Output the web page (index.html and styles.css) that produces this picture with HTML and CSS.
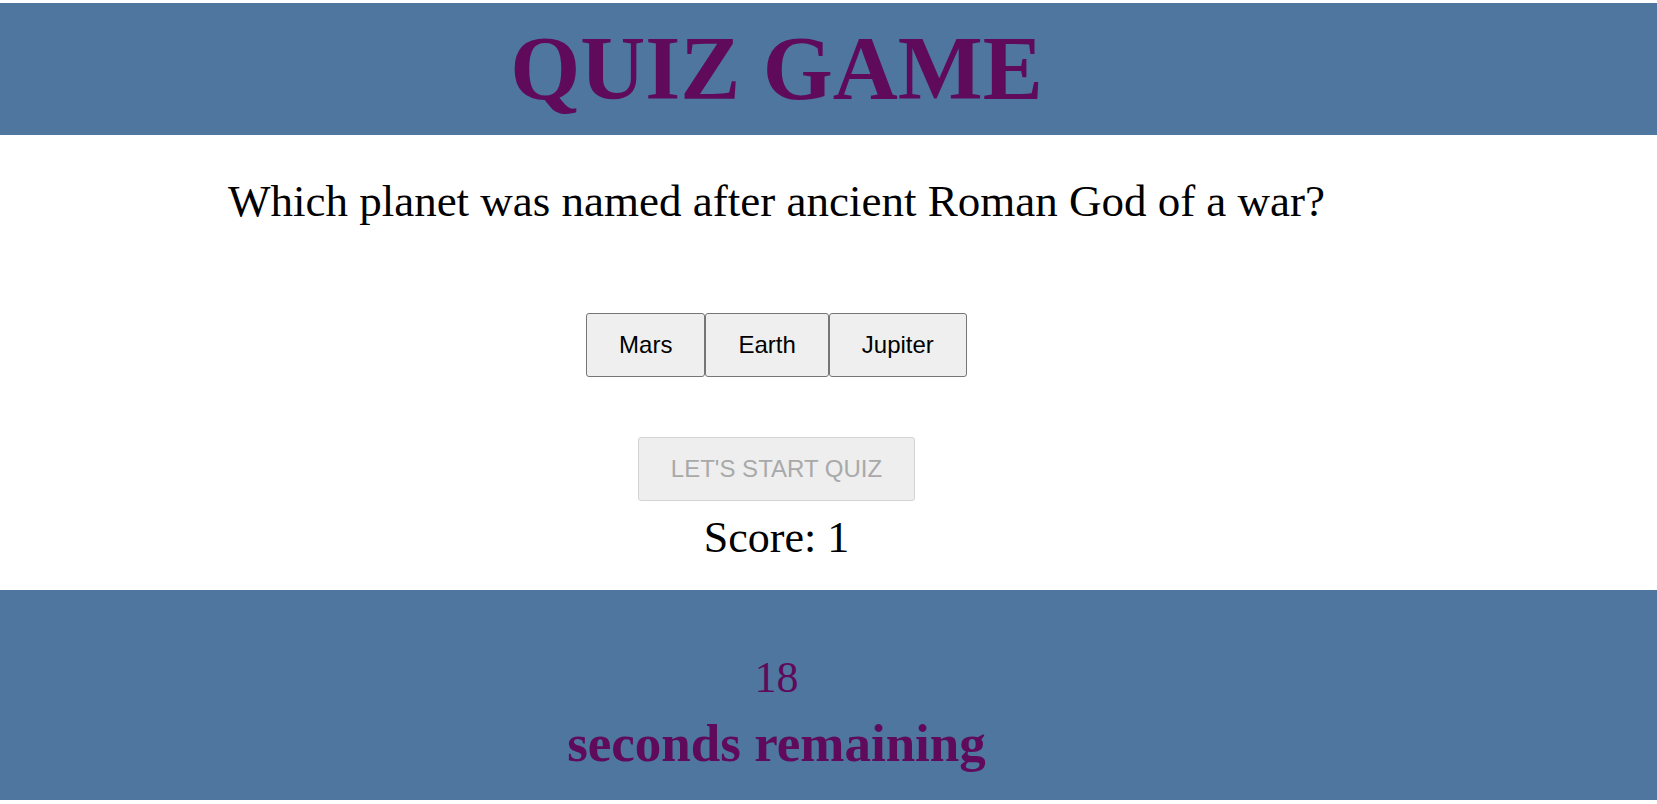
FILE: index.html
```html
<!DOCTYPE html>
<html lang="en">
<head>
<meta charset="utf-8">
<title>Quiz Game</title>
<link rel="stylesheet" href="styles.css">
</head>
<body>
<header class="bar header">
  <div class="inner">
    <h1 class="title">QUIZ GAME</h1>
  </div>
</header>
<main class="inner quiz">
  <p class="question">Which planet was named after ancient Roman God of a war?</p>
  <div class="answers"><button class="btn">Mars</button><button class="btn">Earth</button><button class="btn">Jupiter</button></div>
  <button class="btn start" disabled>LET'S START QUIZ</button>
  <p class="score">Score: 1</p>
</main>
<footer class="bar footer">
  <div class="inner timer">
    <span class="count">18</span>
    <span class="remaining">seconds remaining</span>
  </div>
</footer>
</body>
</html>
```

FILE: styles.css
```css
html, body {
  margin: 0;
  padding: 0;
  background: #ffffff;
}
body {
  padding-top: 3px;
  font-family: "Liberation Serif", "Times New Roman", serif;
  color: #000;
}
.bar {
  background: #4f769f;
  color: #5f0a5a;
}
.inner {
  margin-right: 104px;
  text-align: center;
}
.header {
  height: 132px;
}
.title {
  margin: 0;
  font-size: 90px;
  font-weight: bold;
  line-height: 132px;
}
.quiz {
  display: flex;
  flex-direction: column;
  align-items: center;
}
.question {
  margin: 44px 0 0;
  font-size: 45px;
  line-height: 45px;
}
.answers {
  display: flex;
  margin-top: 89px;
}
.btn {
  font-family: "Liberation Sans", Arial, sans-serif;
  font-size: 24px;
  line-height: 30px;
  padding: 16px 32px;
  border: 1px solid #767676;
  border-radius: 3px;
  background: #efefef;
  color: #000;
  margin: 0;
}
.start {
  margin-top: 60px;
  border-color: #d3d3d3;
  background: #eeeeee;
  color: #a9a9a9;
}
.score {
  margin: 15px 0 0;
  font-size: 44px;
  line-height: 44px;
}
.footer {
  margin-top: 30px;
  height: 210px;
}
.timer {
  display: flex;
  flex-direction: column;
  align-items: center;
  padding-top: 66px;
}
.count {
  font-size: 44px;
  line-height: 44px;
}
.remaining {
  margin-top: 17px;
  font-size: 53px;
  line-height: 53px;
  font-weight: bold;
}
```
